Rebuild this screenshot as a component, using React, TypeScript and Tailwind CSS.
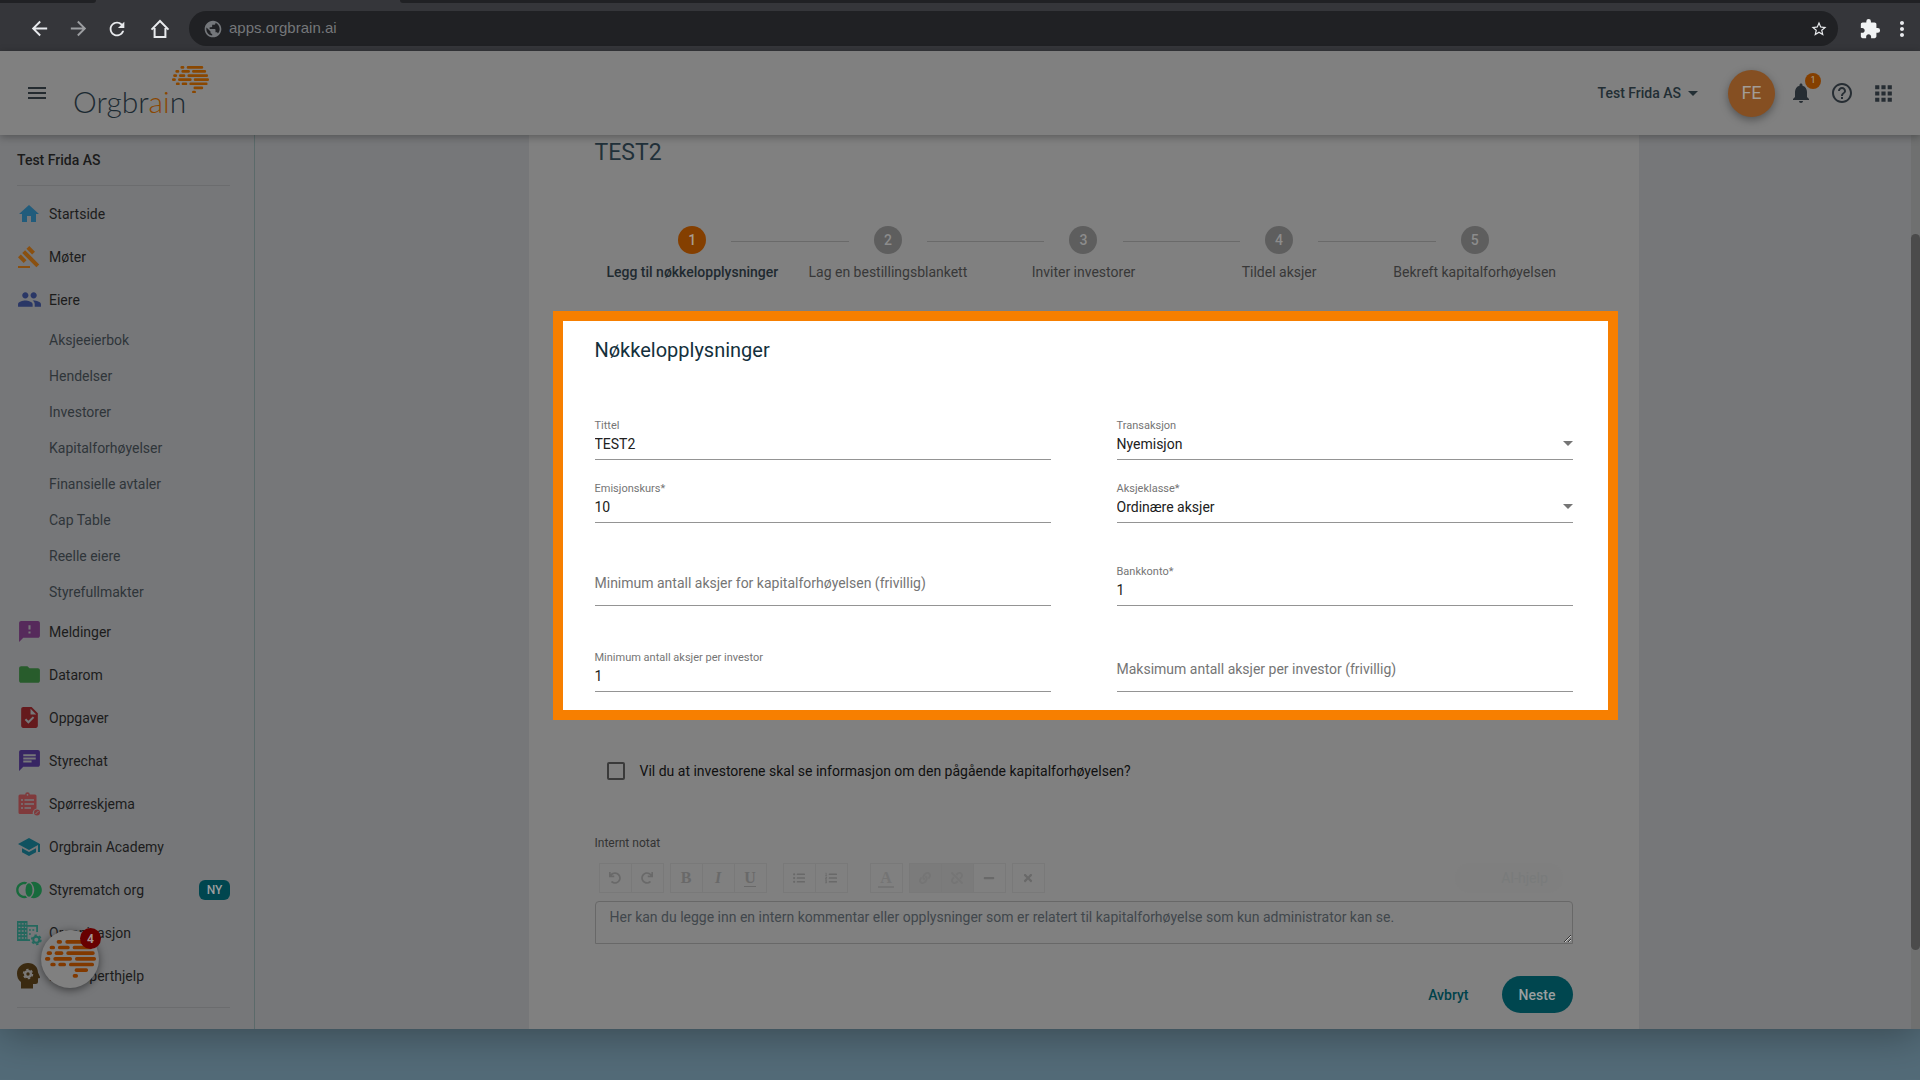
import type { ReactNode } from "react";
import {
  MdApps,
  MdArrowBack,
  MdArrowDropDown,
  MdArrowForward,
  MdChat,
  MdExtension,
  MdFeedback,
  MdFolder,
  MdGavel,
  MdHelpOutline,
  MdHome,
  MdJoinRight,
  MdMenu,
  MdMoreVert,
  MdNotifications,
  MdPeople,
  MdPublic,
  MdRefresh,
  MdSchool,
  MdStarBorder,
  MdTask,
} from "react-icons/md";
import { FaLink, FaListOl, FaListUl, FaMinus, FaRedo, FaTimes, FaUndo, FaUnlink } from "react-icons/fa";

/* Each row: y position followed by [start, end] pairs of its dashes. */
const brainRows: { y: number; dashes: [number, number][] }[] = [
  { y: 5, dashes: [[35, 51], [61, 129]] },
  { y: 22, dashes: [[14, 30], [39, 74], [83, 141]] },
  { y: 39, dashes: [[5, 21], [29, 55], [64, 149]] },
  { y: 56, dashes: [[0, 16], [25, 81], [90, 153]] },
  { y: 73, dashes: [[16, 32], [40, 63], [72, 147]] },
  { y: 90, dashes: [[89, 129]] },
  { y: 107, dashes: [[83, 99]] },
];

function Brain({ className }: { className: string }) {
  return (
    <svg viewBox="0 0 153 112" className={className} fill="currentColor" aria-hidden="true">
      {brainRows.map((row) =>
        row.dashes.map(([a, b]) => (
          <rect key={`${row.y}-${a}`} x={a} y={row.y - 5} width={b - a} height={11} rx={5} />
        )),
      )}
    </svg>
  );
}

function HomeOutline() {
  return (
    <svg viewBox="0 0 20 20" className="size-5" fill="none" stroke="currentColor" strokeWidth={2} aria-hidden="true">
      <path d="M1.5 10.6 10 2l8.500 8.600M4.600 9v9h10.800V9" />
    </svg>
  );
}

function ClipboardIcon() {
  return (
    <svg viewBox="0 0 24 24" className="size-6" aria-hidden="true">
      <path
        fill="currentColor"
        d="M3 2.500h5.200a2.300 2.300 0 0 1 4.600 0H18a1.500 1.500 0 0 1 1.500 1.500v12.500a4.500 4.500 0 0 0-3.700 5.500H3A1.500 1.500 0 0 1 1.500 20.500V4A1.500 1.500 0 0 1 3 2.500Z"
      />
      <path stroke="#76777a" strokeWidth="1.700" d="M4 8h2M7.500 8H17M4 12h2M7.500 12H17M4 16h2M7.500 16H14" />
      <circle cx="10.500" cy="2.800" r="0.900" fill="#76777a" />
      <circle cx="20" cy="20.500" r="3" fill="currentColor" />
      <path stroke="#76777a" strokeWidth="1" d="m18.500 22 3-3" />
    </svg>
  );
}

function BuildingGearIcon() {
  return (
    <svg viewBox="0 0 24 24" className="size-6 overflow-visible" aria-hidden="true">
      <path fill="currentColor" d="M0 0h10.500v4H21v7h-1.800V5.800h-8.700v12.400H13V20H0Z" />
      <path
        stroke="#76777a"
        strokeWidth="1.300"
        strokeDasharray="2 1.300"
        d="M1.400 2.800h8M1.400 6.400h8M1.400 10h8M1.400 13.600h8M1.400 17h8"
      />
      <path stroke="currentColor" strokeWidth="1.600" strokeDasharray="1.800 1.600" d="M12 9h6M12 13h3" />
      <g fill="none" stroke="currentColor">
        <circle cx="19.300" cy="18.800" r="3" strokeWidth="2" />
        <circle cx="19.300" cy="18.800" r="4.600" strokeWidth="1.600" strokeDasharray="2.400 2.417" />
      </g>
    </svg>
  );
}

function HeadGearIcon() {
  return (
    <svg viewBox="0 0 24 26" className="w-6" aria-hidden="true">
      <path
        fill="currentColor"
        d="M11 0C17.500 0 21 4.500 21 9.500l2 4.500q0.300 1.200-1.200 1.200H21v3.300q0 2.500-2.500 2.500H16v4.500H4V19C1 17 0 13.500 0 10.500 0 4.500 5 0 11 0Z"
      />
      <g fill="none" stroke="#7a7876">
        <circle cx="11" cy="11" r="2.900" strokeWidth="2.400" />
        <circle cx="11" cy="11" r="4.500" strokeWidth="1.500" strokeDasharray="2.400 2.312" />
      </g>
    </svg>
  );
}

type NavEntry = { label: string; color: string; icon: ReactNode; badge?: string };

const topNav: NavEntry[] = [
  { label: "Startside", color: "text-[#215c7c]", icon: <MdHome size={24} /> },
  { label: "Møter", color: "text-[#8a5010]", icon: <MdGavel size={24} /> },
  { label: "Eiere", color: "text-[#2a3766]", icon: <MdPeople size={25} /> },
];

const ownerLinks = [
  "Aksjeeierbok",
  "Hendelser",
  "Investorer",
  "Kapitalforhøyelser",
  "Finansielle avtaler",
  "Cap Table",
  "Reelle eiere",
  "Styrefullmakter",
];

const bottomNav: NavEntry[] = [
  { label: "Meldinger", color: "text-[#562a5b]", icon: <MdFeedback size={25} /> },
  { label: "Datarom", color: "text-[#285c2c]", icon: <MdFolder size={25} /> },
  { label: "Oppgaver", color: "text-[#651a1d]", icon: <MdTask size={25} /> },
  { label: "Styrechat", color: "text-[#372563]", icon: <MdChat size={25} /> },
  { label: "Spørreskjema", color: "text-[#803a3c]", icon: <ClipboardIcon /> },
  { label: "Orgbrain Academy", color: "text-[#105260]", icon: <MdSchool size={24} /> },
  { label: "Styrematch org", color: "text-[#186a3c]", icon: <MdJoinRight size={28} />, badge: "NY" },
  { label: "Organisasjon", color: "text-[#24685e]", icon: <BuildingGearIcon /> },
  { label: "Få eksperthjelp", color: "text-[#3b2a10]", icon: <HeadGearIcon /> },
];

function NavLink({ entry }: { entry: NavEntry }) {
  return (
    <li>
      <a href="#" className="flex h-[43px] items-center text-sm text-[#1c1c1c]">
        <span className={`mr-2 flex w-6 shrink-0 justify-center ${entry.color}`}>
          <span className="shrink-0">{entry.icon}</span>
        </span>
        {entry.label}
        {entry.badge && (
          <span className="ml-auto flex h-5 w-[31px] items-center justify-center rounded-md bg-[#00464f] text-xs font-medium text-[#9a9d9e]">
            {entry.badge}
          </span>
        )}
      </a>
    </li>
  );
}

const steps = [
  "Legg til nøkkelopplysninger",
  "Lag en bestillingsblankett",
  "Inviter investorer",
  "Tildel aksjer",
  "Bekreft kapitalforhøyelsen",
];

type FieldData = { id: string; label: string; value?: string; select?: boolean };

const fieldRows: { id: string; gap: string; fields: FieldData[] }[] = [
  {
    id: "general",
    gap: "mt-[53px]",
    fields: [
      { id: "tittel", label: "Tittel", value: "TEST2" },
      { id: "transaksjon", label: "Transaksjon", value: "Nyemisjon", select: true },
    ],
  },
  {
    id: "price",
    gap: "mt-5",
    fields: [
      { id: "emisjonskurs", label: "Emisjonskurs*", value: "10" },
      { id: "aksjeklasse", label: "Aksjeklasse*", value: "Ordinære aksjer", select: true },
    ],
  },
  {
    id: "account",
    gap: "mt-10",
    fields: [
      { id: "min-total", label: "Minimum antall aksjer for kapitalforhøyelsen (frivillig)" },
      { id: "bankkonto", label: "Bankkonto*", value: "1" },
    ],
  },
  {
    id: "limits",
    gap: "mt-[43px]",
    fields: [
      { id: "min-investor", label: "Minimum antall aksjer per investor", value: "1" },
      { id: "maks-investor", label: "Maksimum antall aksjer per investor (frivillig)" },
    ],
  },
];

function Field({ id, label, value, select }: FieldData) {
  if (!value) {
    return (
      <div className="flex flex-col border-b border-[#949494]">
        <label htmlFor={id} className="text-sm leading-5 text-[#757575]">
          {label}
        </label>
        <input id={id} type="text" className="h-3 w-full bg-transparent text-xs outline-none" />
      </div>
    );
  }
  return (
    <div className="flex flex-col border-b border-[#949494]">
      <label htmlFor={id} className="text-[11px] leading-[18px] text-[#757575]">
        {label}
      </label>
      {select ? (
        <div className="relative flex h-6 items-start">
          <select
            id={id}
            defaultValue={value}
            className="h-[18px] w-full appearance-none bg-transparent text-sm leading-[18px] text-[#212121] outline-none"
          >
            <option>{value}</option>
          </select>
          <svg viewBox="0 0 10 5" className="pointer-events-none absolute top-1.5 right-0 w-2.5 fill-[#757575]" aria-hidden="true">
            <path d="M0 0h10L5 5Z" />
          </svg>
        </div>
      ) : (
        <input
          id={id}
          type="text"
          defaultValue={value}
          className="h-6 w-full bg-transparent pb-1.5 text-sm leading-[18px] text-[#212121] outline-none"
        />
      )}
    </div>
  );
}

type Tool = { name: string; icon: ReactNode; off?: boolean };

const toolGroups: { gap: string; tools: Tool[] }[] = [
  { gap: "ml-1", tools: [{ name: "Angre", icon: <FaUndo /> }, { name: "Gjør om", icon: <FaRedo /> }] },
  {
    gap: "ml-1.5",
    tools: [
      { name: "Fet", icon: <span className="font-bold">B</span> },
      { name: "Kursiv", icon: <span className="font-bold italic">I</span> },
      { name: "Understrek", icon: <span className="border-b border-current font-bold">U</span> },
    ],
  },
  {
    gap: "ml-4",
    tools: [{ name: "Punktliste", icon: <FaListUl size={14} /> }, { name: "Nummerert liste", icon: <FaListOl size={14} /> }],
  },
  {
    gap: "ml-[22px]",
    tools: [
      {
        name: "Tekstfarge",
        icon: <span className="border-b-2 border-[#747474] px-0.5 font-bold text-[#747474]">A</span>,
      },
    ],
  },
  {
    gap: "ml-1.5",
    tools: [
      { name: "Lenke", icon: <FaLink />, off: true },
      { name: "Fjern lenke", icon: <FaUnlink />, off: true },
      { name: "Skillelinje", icon: <FaMinus /> },
    ],
  },
  { gap: "ml-1.5", tools: [{ name: "Fjern formatering", icon: <FaTimes /> }] },
];

function EditorToolbar() {
  return (
    <div className="mt-3 flex items-center">
      {toolGroups.map((group) => (
        <div key={group.tools[0].name} className={`flex ${group.gap}`}>
          {group.tools.map((tool) => (
            <button
              key={tool.name}
              type="button"
              aria-label={tool.name}
              className={`-mr-px flex h-[30px] w-[33px] items-center justify-center border border-[#797979] font-['Liberation_Serif',serif] text-xs last:mr-0 ${
                tool.off ? "bg-[#7b7b7b] text-[#757575]" : "text-[#696969]"
              }`}
            >
              <span className="text-base leading-4 [&>svg]:size-3">{tool.icon}</span>
            </button>
          ))}
        </div>
      ))}
      <button type="button" className="mr-2.5 ml-auto h-[30px] w-[108px] rounded-full bg-[#7f7f7f] pl-8 text-sm text-[#797b7b]">
        AI-hjelp
      </button>
    </div>
  );
}

function BrowserBar() {
  return (
    <div className="bg-[#35363a]">
      <div className="flex h-[3px]">
        <div className="w-24 rounded-br-lg bg-[#202124]" />
        <div className="w-[304px]" />
        <div className="flex-1 rounded-bl-lg bg-[#202124]" />
      </div>
      <div className="flex h-12 items-center pt-[3px] text-[#e8eaed]">
        <div className="flex items-center gap-4 pr-[19px] pl-7">
          <button type="button" aria-label="Tilbake">
            <MdArrowBack size={23} />
          </button>
          <button type="button" aria-label="Frem" className="text-[#9c9ea1]">
            <MdArrowForward size={23} />
          </button>
          <button type="button" aria-label="Last inn på nytt">
            <MdRefresh size={22} />
          </button>
          <button type="button" aria-label="Hjem" className="ml-1.5">
            <HomeOutline />
          </button>
        </div>
        <div className="flex h-[35px] flex-1 items-center rounded-full bg-[#202124] pr-2.5 pl-3.5">
          <MdPublic size={20} className="text-[#74777b]" />
          <input
            type="text"
            aria-label="Adresse"
            defaultValue="apps.orgbrain.ai"
            className="ml-1.5 flex-1 bg-transparent font-['Liberation_Sans',sans-serif] text-[15px] text-[#75777a] outline-none"
          />
          <button type="button" aria-label="Bokmerke">
            <MdStarBorder size={18} />
          </button>
        </div>
        <button type="button" aria-label="Utvidelser" className="ml-[21px] text-[#f1f3f4]">
          <MdExtension size={22} />
        </button>
        <button type="button" aria-label="Meny" className="mr-1.5 ml-[9px]">
          <MdMoreVert size={24} />
        </button>
      </div>
    </div>
  );
}

function Header() {
  return (
    <header className="relative z-10 flex h-[84px] items-center bg-[#808080] pr-6 pl-[25px] text-[#262d33] shadow-[0_2px_8px_rgba(0,0,0,0.3)]">
      <button type="button" aria-label="Åpne meny">
        <MdMenu size={24} className="text-[#242b30]" />
      </button>
      <a href="#" aria-label="Orgbrain" className="relative ml-6 flex items-center pt-4">
        <span className="font-[Lato,sans-serif] text-3xl font-light text-[#1c2a32]">
          Orgbr<span className="text-[#8a4700]">ai</span>n
        </span>
        <Brain className="absolute -top-px right-[-23px] w-[37px] text-[#8a4700]" />
      </a>
      <button type="button" className="ml-auto flex items-center text-sm font-medium text-[#222e34]">
        Test Frida AS
        <MdArrowDropDown size={24} />
      </button>
      <button
        type="button"
        className="ml-[23px] size-[47px] rounded-full bg-[#854f22] text-lg text-[#a29c97] shadow-[0_3px_8px_rgba(0,0,0,0.35)]"
      >
        FE
      </button>
      <button type="button" aria-label="Varsler" className="relative ml-3.5">
        <MdNotifications size={24} />
        <span className="absolute -top-2 right-[-8px] flex size-4 items-center justify-center rounded-full bg-[#843f00] text-[9px] text-[#aaa095]">
          1
        </span>
      </button>
      <button type="button" aria-label="Hjelp" className="ml-[17px]">
        <MdHelpOutline size={24} />
      </button>
      <button type="button" aria-label="Apper" className="ml-[17px]">
        <MdApps size={25} />
      </button>
    </header>
  );
}

function Sidebar() {
  return (
    <nav className="relative w-[255px] shrink-0 border-r border-[#5b6a6a] bg-[#767779] pb-5 pl-[17px]">
      <div className="mr-6 border-b border-[#6b6c6e] pt-[15px] pb-[15px] text-sm leading-5 font-medium text-[#1b1b1b]">
        Test Frida AS
      </div>
      <ul className="mt-[6px] mr-6">
        {topNav.map((e) => (
          <NavLink key={e.label} entry={e} />
        ))}
      </ul>
      <ul className="mt-px mr-6 pl-8">
        {ownerLinks.map((l) => (
          <li key={l}>
            <a href="#" className="flex h-9 items-center text-sm text-[#2f3539]">
              {l}
            </a>
          </li>
        ))}
      </ul>
      <ul className="mr-6 border-b border-[#6b6c6e] pb-2.5">
        {bottomNav.map((e) => (
          <NavLink key={e.label} entry={e} />
        ))}
      </ul>
      <button
        type="button"
        aria-label="Orgbrain-assistent, 4 nye"
        className="absolute bottom-[41px] left-[41px] flex size-[58px] items-center justify-center rounded-full bg-[#808080] shadow-[0_2px_8px_rgba(0,0,0,0.5)]"
      >
        <Brain className="w-[51px] text-[#813900]" />
        <span className="absolute -top-0.5 right-[-2px] flex size-[21px] items-center justify-center rounded-full bg-[#680000] text-xs font-bold text-[#a59494]">
          4
        </span>
      </button>
    </nav>
  );
}

function Stepper() {
  return (
    <ol className="mt-[57px] grid grid-cols-5">
      {steps.map((label, i) => (
        <li key={label} className="relative flex flex-col items-center whitespace-nowrap">
          <span
            className={`flex size-7 items-center justify-center rounded-full text-sm font-medium ${
              i === 0 ? "bg-[#843f00] text-[#a89c90]" : "bg-[#5e5e5e] text-[#8c8c8c]"
            }`}
          >
            {i + 1}
          </span>
          <span className={`mt-2 text-sm leading-5 ${i === 0 ? "font-medium text-[#1f2a30]" : "text-[#383838]"}`}>
            {label}
          </span>
          {i < steps.length - 1 && <span className="absolute top-[15px] left-[70%] w-3/5 border-t border-[#6a6a6a]" />}
        </li>
      ))}
    </ol>
  );
}

export default function App() {
  return (
    <div className="flex min-h-screen flex-col bg-[#536b78] font-[Roboto,sans-serif]">
      <div className="flex flex-1 flex-col shadow-[0_4px_40px_rgba(0,0,0,0.35)]">
        <BrowserBar />
        <Header />
        <div className="flex flex-1 bg-[#767779]">
          <Sidebar />
          <main className="flex flex-1 justify-center pl-px">
            <form className="w-full max-w-[1110px] bg-[#808080] px-[66px] pb-[15px]">
              <h1 className="pt-0.5 text-[23px] leading-8 text-[#22313a]">TEST2</h1>
              <Stepper />
              <section className="mt-[29px] mr-[-45px] ml-[-42px] border-10 border-[#f77f00] bg-white pt-[15px] pr-[35px] pb-[18px] pl-8">
                <h2 className="text-xl leading-7 text-[#14303c]">Nøkkelopplysninger</h2>
                {fieldRows.map((row) => (
                  <div key={row.id} className={`grid grid-cols-2 items-end gap-x-[66px] ${row.gap}`}>
                    {row.fields.map((f) => (
                      <Field key={f.id} {...f} />
                    ))}
                  </div>
                ))}
              </section>
              <div className="mt-[41px] flex h-5 items-center pl-3">
                <input
                  id="vis-info"
                  type="checkbox"
                  className="size-[18px] appearance-none rounded-xs border-2 border-[#3a3a3a] checked:bg-[#3a3a3a]"
                />
                <label htmlFor="vis-info" className="pl-[15px] text-sm text-[#101010]">
                  Vil du at investorene skal se informasjon om den pågående kapitalforhøyelsen?
                </label>
              </div>
              <label htmlFor="notat" className="mt-[54px] block text-xs leading-4 text-[#333333]">
                Internt notat
              </label>
              <EditorToolbar />
              <textarea
                id="notat"
                placeholder="Her kan du legge inn en intern kommentar eller opplysninger som er relatert til kapitalforhøyelse som kun administrator kan se."
                className="mt-2 block h-[43px] w-full rounded-t border border-[#686868] bg-transparent px-3.5 py-[5px] text-sm leading-5 outline-none placeholder:text-[#41474c]"
              />
              <div className="mt-8 flex items-center justify-end">
                <button type="button" className="text-sm font-medium text-[#00424b]">
                  Avbryt
                </button>
                <button type="submit" className="ml-[33px] h-[37px] w-[71px] rounded-full bg-[#00464f] text-sm font-medium text-[#999fa0]">
                  Neste
                </button>
              </div>
            </form>
          </main>
          <div className="flex w-[9px] flex-col bg-[#6f7070]" aria-hidden="true">
            <div className="mt-[99px] mb-[79px] flex-1 rounded-full bg-[#4b4b4b]" />
          </div>
        </div>
      </div>
      <div className="h-[51px]" />
    </div>
  );
}
